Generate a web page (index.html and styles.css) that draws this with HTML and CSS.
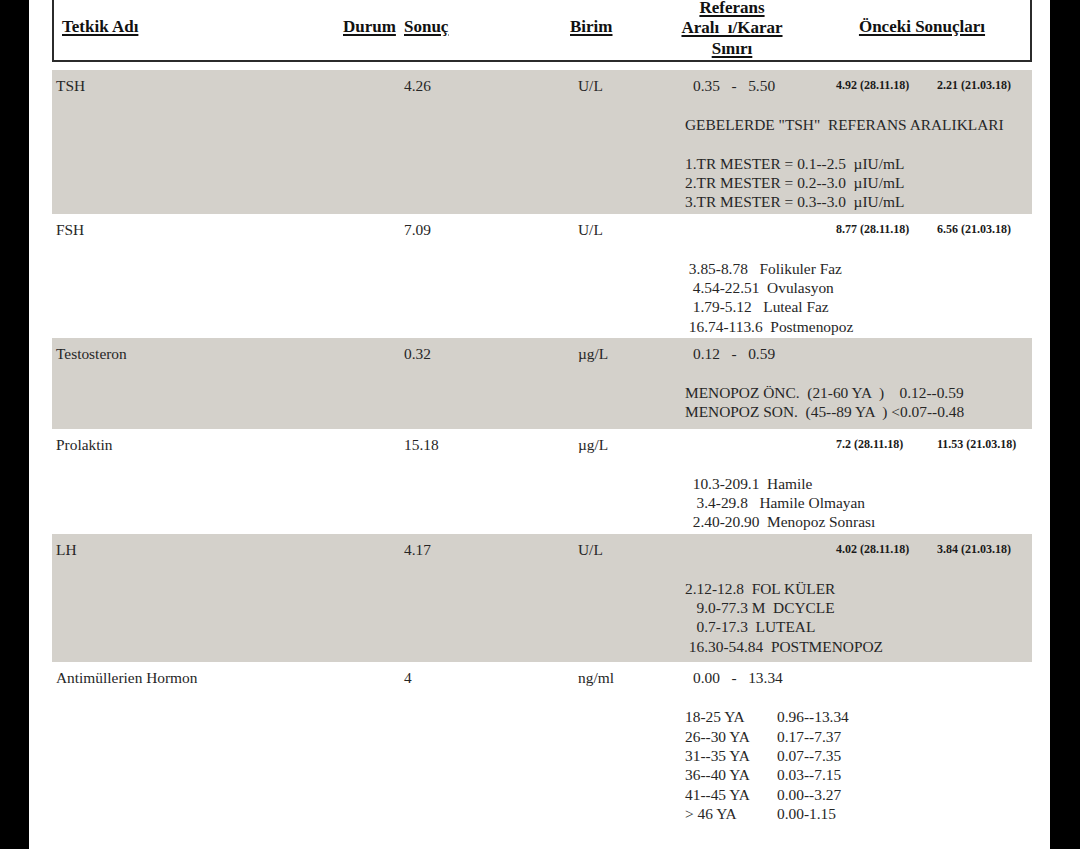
FILE: index.html
```html
<!DOCTYPE html>
<html lang="tr">
<head>
<meta charset="utf-8">
<title>Tetkik Sonuçları</title>
<link rel="stylesheet" href="styles.css">
</head>
<body>
<div class="page">
  <div class="head">
    <div class="h-name"><u>Tetkik Adı</u></div>
    <div class="h-durum"><u>Durum</u></div>
    <div class="h-sonuc"><u>Sonuç</u></div>
    <div class="h-birim"><u>Birim</u></div>
    <div class="h-ref"><u>Referans</u><br><u>Aralı  ı/Karar</u><br><u>Sınırı</u></div>
    <div class="h-prev"><u>Önceki Sonuçları</u></div>
  </div>

  <div class="row gray">
    <div class="c-name">TSH</div>
    <div class="c-res">4.26</div>
    <div class="c-unit">U/L</div>
    <div class="c-range">0.35   -   5.50</div>
    <div class="c-prev">4.92 (28.11.18)</div>
    <div class="c-prev">2.21 (21.03.18)</div>
    <div class="c-notes">GEBELERDE "TSH"  REFERANS ARALIKLARI

1.TR MESTER = 0.1--2.5  µIU/mL
2.TR MESTER = 0.2--3.0  µIU/mL
3.TR MESTER = 0.3--3.0  µIU/mL</div>
  </div>

  <div class="row">
    <div class="c-name">FSH</div>
    <div class="c-res">7.09</div>
    <div class="c-unit">U/L</div>
    <div class="c-range"></div>
    <div class="c-prev">8.77 (28.11.18)</div>
    <div class="c-prev">6.56 (21.03.18)</div>
    <div class="c-notes"> 3.85-8.78   Folikuler Faz
  4.54-22.51  Ovulasyon
  1.79-5.12   Luteal Faz
 16.74-113.6  Postmenopoz</div>
  </div>

  <div class="row gray row-test">
    <div class="c-name">Testosteron</div>
    <div class="c-res">0.32</div>
    <div class="c-unit">µg/L</div>
    <div class="c-range">0.12   -   0.59</div>
    <div class="c-prev"></div>
    <div class="c-prev"></div>
    <div class="c-notes">MENOPOZ ÖNC.  (21-60 YA  )    0.12--0.59
MENOPOZ SON.  (45--89 YA  ) &lt;0.07--0.48</div>
  </div>

  <div class="row">
    <div class="c-name">Prolaktin</div>
    <div class="c-res">15.18</div>
    <div class="c-unit">µg/L</div>
    <div class="c-range"></div>
    <div class="c-prev">7.2 (28.11.18)</div>
    <div class="c-prev">11.53 (21.03.18)</div>
    <div class="c-notes">  10.3-209.1  Hamile
   3.4-29.8   Hamile Olmayan
  2.40-20.90  Menopoz Sonrası</div>
  </div>

  <div class="row gray row-lh">
    <div class="c-name">LH</div>
    <div class="c-res">4.17</div>
    <div class="c-unit">U/L</div>
    <div class="c-range"></div>
    <div class="c-prev">4.02 (28.11.18)</div>
    <div class="c-prev">3.84 (21.03.18)</div>
    <div class="c-notes">2.12-12.8  FOL KÜLER
   9.0-77.3 M  DCYCLE
   0.7-17.3  LUTEAL
 16.30-54.84  POSTMENOPOZ</div>
  </div>

  <div class="row">
    <div class="c-name">Antimüllerien Hormon</div>
    <div class="c-res">4</div>
    <div class="c-unit">ng/ml</div>
    <div class="c-range">0.00   -   13.34</div>
    <div class="c-prev"></div>
    <div class="c-prev"></div>
    <div class="c-notes amh">
      <span>18-25 YA</span><span>0.96--13.34</span>
      <span>26--30 YA</span><span>0.17--7.37</span>
      <span>31--35 YA</span><span>0.07--7.35</span>
      <span>36--40 YA</span><span>0.03--7.15</span>
      <span>41--45 YA</span><span>0.00--3.27</span>
      <span>&gt; 46 YA</span><span>0.00-1.15</span>
    </div>
  </div>
</div>
</body>
</html>
```

FILE: styles.css
```css
html, body {
  margin: 0;
  padding: 0;
  background: #000;
}

.page {
  margin-left: 29px;
  width: 1021px;
  min-height: 849px;
  background: #fff;
  box-sizing: border-box;
  padding: 0 18px 0 23px;
  font-family: "Liberation Serif", "Times New Roman", serif;
  color: #262626;
  overflow: hidden;
}

/* header box */
.head {
  display: grid;
  grid-template-columns: 289px 61px 166px 90px 144px 1fr;
  grid-template-rows: 55px;
  align-items: center;
  height: 55px;
  padding-bottom: 5px;
  border: 2px solid #2b2b2b;
  border-top: none;
  font-size: 17px;
  font-weight: bold;
  color: #111;
  line-height: 20.5px;
}

.head u {
  text-decoration-thickness: 2px;
  text-underline-offset: 2px;
}

.h-name { padding-left: 8px; }
.h-ref {
  text-align: center;
  white-space: pre;
  padding-top: 2px;
}
.h-prev {
  text-align: center;
  padding-left: 10px;
}

/* result rows */
.row {
  display: grid;
  grid-template-columns: 348px 174px 107px 151px 101px 1fr;
  padding: 6px 0 2px 4px;
  font-size: 15.4px;
  line-height: 19.4px;
}

.head + .row { margin-top: 8px; }

.gray { background: #d4d1cb; }

.row-test { padding-bottom: 7px; }
.row-lh { padding-bottom: 6px; }

.c-range {
  padding-left: 8px;
  white-space: pre;
}

.c-prev {
  font-size: 12px;
  font-weight: bold;
  color: #1a1a1a;
  white-space: nowrap;
}

.c-notes {
  grid-column: 4 / -1;
  margin-top: 19.4px;
  white-space: pre;
}

.amh {
  display: grid;
  grid-template-columns: 92px auto;
  justify-content: start;
  white-space: normal;
}
```
